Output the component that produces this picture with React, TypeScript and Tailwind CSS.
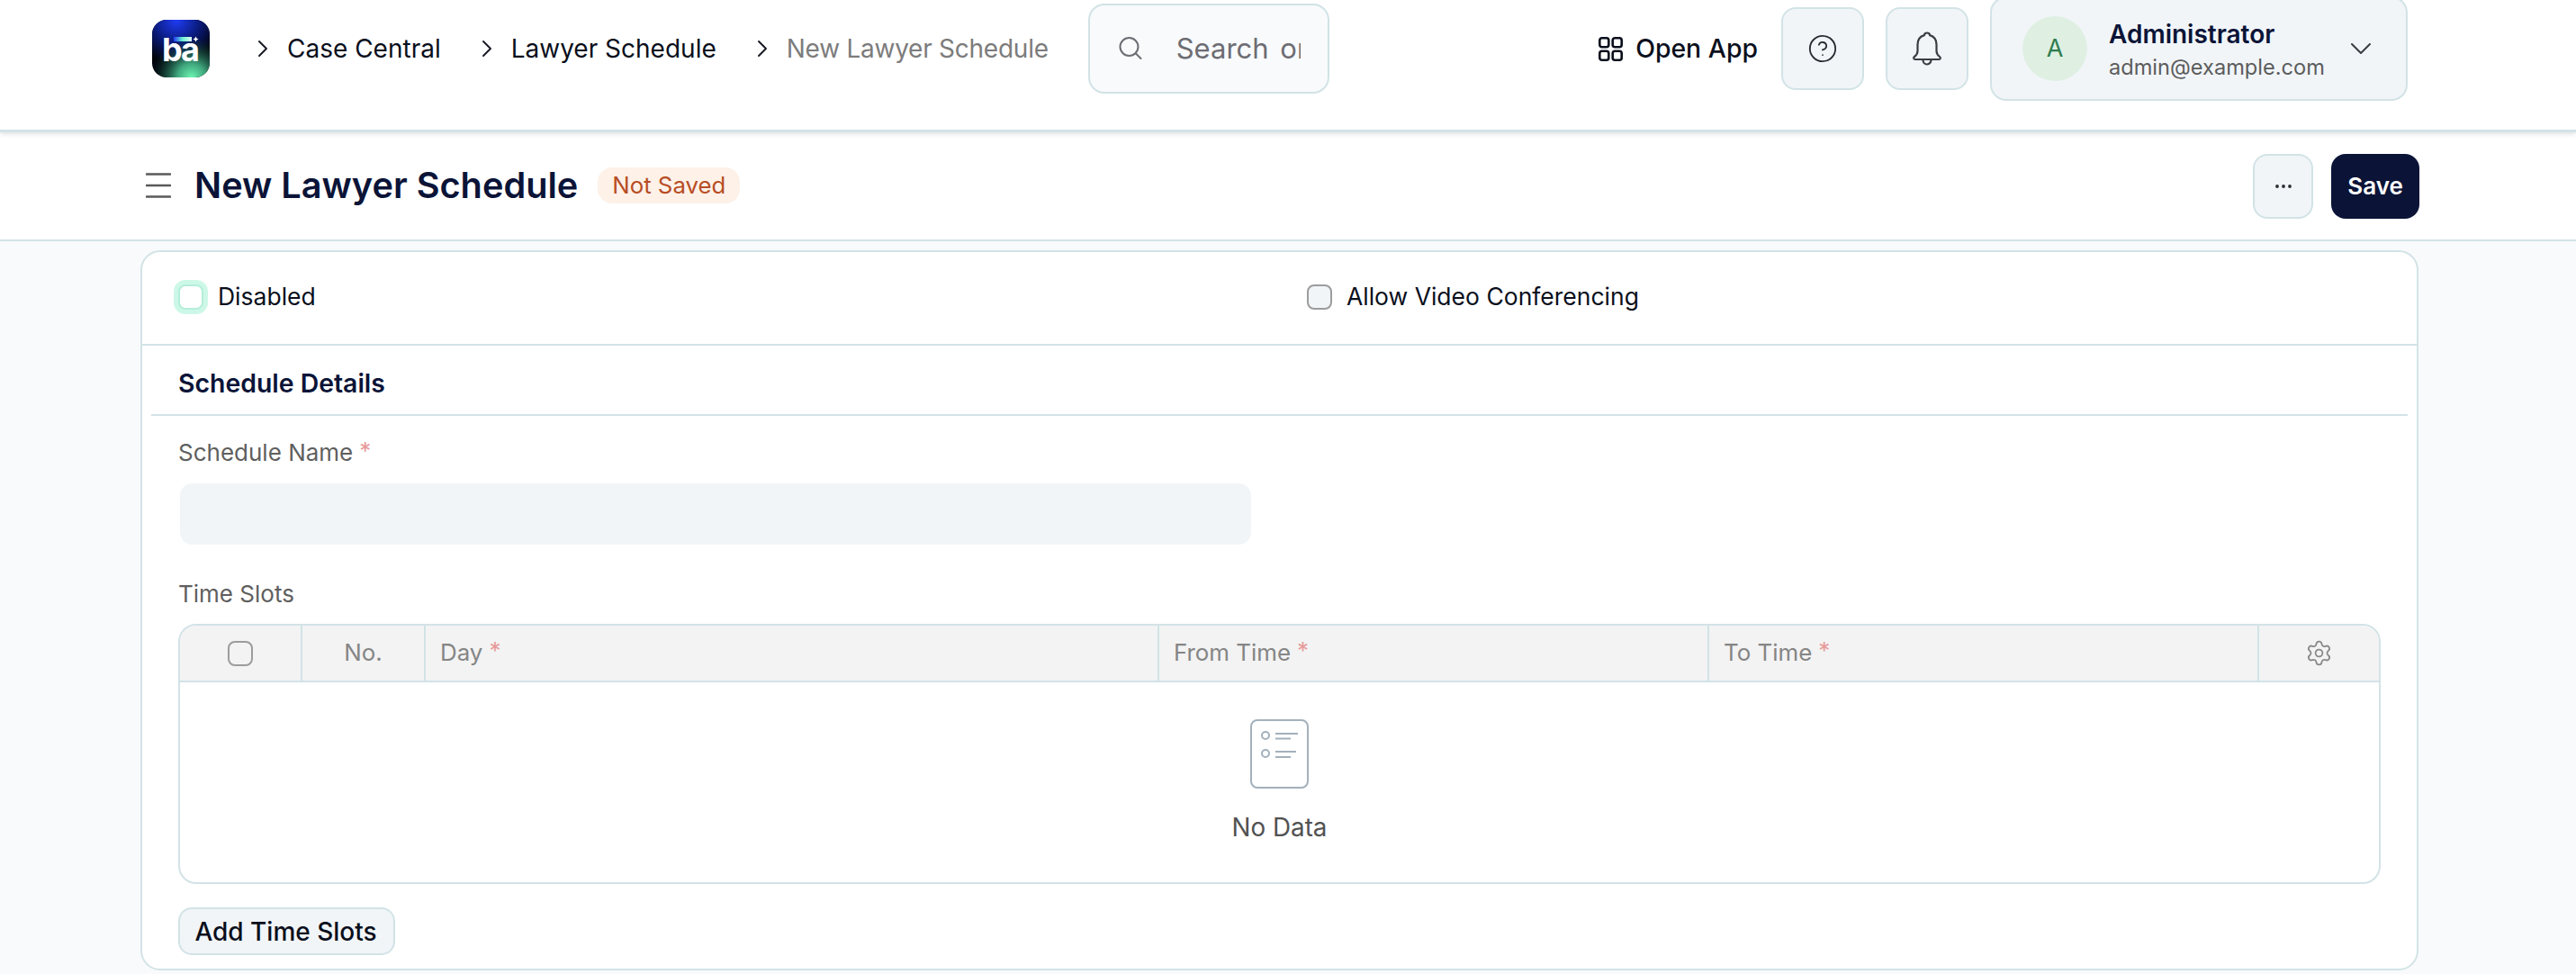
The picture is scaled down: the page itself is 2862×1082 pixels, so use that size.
import { ChevronRight, CircleHelp, Ellipsis, Settings } from "lucide-react";

const Logo = () => (
  <svg width="64" height="64" viewBox="0 0 64 64" className="shrink-0">
    <defs>
      <radialGradient id="logoBlue" cx="0.42" cy="0" r="0.75">
        <stop offset="0" stopColor="#1f3cf5" />
        <stop offset="0.55" stopColor="#0a1a7a" />
        <stop offset="1" stopColor="#0a1a7a" stopOpacity="0" />
      </radialGradient>
      <radialGradient id="logoGreen" cx="0.68" cy="1" r="0.7">
        <stop offset="0" stopColor="#6df5b2" />
        <stop offset="0.35" stopColor="#3fa57c" />
        <stop offset="1" stopColor="#0b3a32" stopOpacity="0" />
      </radialGradient>
      <linearGradient id="logoBar" x1="0" x2="1" y1="0" y2="0">
        <stop offset="0" stopColor="#1f3cf5" />
        <stop offset="0.5" stopColor="#6df5d2" />
        <stop offset="1" stopColor="#e6fff4" />
      </linearGradient>
      <clipPath id="logoClip">
        <rect width="64" height="64" rx="16" />
      </clipPath>
    </defs>
    <g clipPath="url(#logoClip)">
      <rect width="64" height="64" fill="#02040c" />
      <rect width="64" height="64" fill="url(#logoBlue)" />
      <rect width="64" height="64" fill="url(#logoGreen)" />
      <rect x="24" y="19" width="20" height="5" fill="url(#logoBar)" />
      <path d="M48.5 18.500 L49.500 20.500 L51.500 21.500 L49.500 22.500 L48.500 24.500 L47.500 22.500 L45.500 21.500 L47.500 20.500 Z" fill="#fff" />
      <text x="11" y="46" fontSize="36" fontWeight="700" fill="#fff" fontFamily="Inter, sans-serif" textLength="42">
        ba
      </text>
    </g>
  </svg>
);

const Crumb = ({ label, current }: { label: string; current?: boolean }) => (
  <div className="flex items-center gap-[11px]">
    <ChevronRight size={32} strokeWidth={1.4} className="shrink-0 text-[#14171f]" />
    <span className={current ? "tracking-[-0.25px] text-[#7c7c7c]" : "text-[#0a0f1c]"}>{label}</span>
  </div>
);

const SearchIcon = () => (
  <svg width="26" height="26" viewBox="0 0 26 26" fill="none" stroke="#6d6d73" strokeWidth="2" strokeLinecap="round" className="shrink-0">
    <circle cx="11.500" cy="11" r="10" />
    <path d="M19 18.500L24.500 24" />
  </svg>
);

const AppsIcon = () => (
  <svg width="27" height="27" viewBox="0 0 27 27" fill="none" stroke="#0a0f1c" strokeWidth="2.600" className="shrink-0">
    <rect x="1.300" y="1.300" width="10" height="10" rx="2.500" />
    <rect x="15.700" y="1.300" width="10" height="10" rx="2.500" />
    <rect x="1.300" y="15.700" width="10" height="10" rx="2.500" />
    <rect x="15.700" y="15.700" width="10" height="10" rx="2.500" />
  </svg>
);

const BellIcon = () => (
  <svg width="32" height="38" viewBox="0 0 32 38" fill="none" stroke="#3a3d42" strokeWidth="2.200" strokeLinejoin="round">
    <path d="M16 1.500c-1.800 0-3 1.200-3 2.600C8 5.500 5.500 9.500 5.500 14.500v7c0 3-1.500 5-3.500 6.500-1.300 1-1 3 .8 3h26.400c1.800 0 2.100-2 .8-3-2-1.500-3.500-3.500-3.500-6.500v-7c0-5-2.500-9-7.500-10.400 0-1.400-1.200-2.600-3-2.600z" />
    <path d="M11.500 31.500a4.500 5 0 0 0 9 0" />
  </svg>
);

const CaretDown = () => (
  <svg width="22" height="12" viewBox="0 0 22 12" fill="none" stroke="#3a3d42" strokeWidth="2" strokeLinecap="round" className="shrink-0">
    <path d="M1 1L11 11L21 1" />
  </svg>
);

const Hamburger = () => (
  <svg width="28" height="28" viewBox="0 0 28 28" className="shrink-0 text-[#5a5a5a]">
    <path d="M1 1.500H27M1 14H27M1 26.500H27" stroke="currentColor" strokeWidth="2.600" strokeLinecap="round" />
  </svg>
);

const Required = () => <span className="relative -top-[2px] ml-[7px] text-[#e79a9a]">*</span>;

const EmptyIcon = () => (
  <svg width="65" height="77" viewBox="0 0 65 77" fill="none" stroke="#a3b1bc">
    <rect x="1" y="1" width="63" height="75" rx="7" strokeWidth="2" />
    <circle cx="17" cy="18" r="4" strokeWidth="2" />
    <circle cx="17" cy="38" r="4" strokeWidth="2" />
    <path d="M28 16H53M28 21.500H45M28 36H51M28 42H45" strokeWidth="2" />
  </svg>
);

const HeaderCell = ({ children }: { children: React.ReactNode }) => (
  <div className="flex items-center border-r-2 border-[#d2e3e6] pl-[16px]">{children}</div>
);

export default function App() {
  return (
    <div className="h-[1082px] w-full overflow-hidden bg-[#f8fafc] font-['Inter',sans-serif]">
      <header className="relative z-10 h-[147px] border-b-[3px] border-[#d2e3e6] bg-white shadow-[0_2px_5px_rgba(0,0,0,0.12)]">
        <div className="flex h-[108px] items-center pl-[169px] pr-[187px] text-[28px]">
          <Logo />
          <nav className="ml-[43px] flex shrink-0 items-center gap-[35px]">
            <Crumb label="Case Central" />
            <Crumb label="Lawyer Schedule" />
            <Crumb label="New Lawyer Schedule" current />
          </nav>
          <div className="ml-[44px] flex h-[100px] w-[268px] shrink-0 items-center rounded-[18px] border-2 border-[#d2e3e6] bg-[#f8fafc] pl-[32px]">
            <SearchIcon />
            <div className="ml-[38px] w-[138px] overflow-hidden whitespace-nowrap text-[31px] text-[#6d6d73] [word-spacing:4px]">Search or type</div>
          </div>
          <div className="ml-auto flex items-center">
            <AppsIcon />
            <span className="ml-[14px] text-[28.4px] font-medium text-[#0a0f1c]">Open App</span>
            <button className="ml-[26px] flex h-[92px] w-[92px] items-center justify-center rounded-[16px] border-2 border-[#d2e3e6] bg-[#f1f5f8]">
              <CircleHelp size={34} strokeWidth={1.3} className="text-[#2a2e33]" />
            </button>
            <button className="ml-[24px] flex h-[92px] w-[92px] items-center justify-center rounded-[16px] border-2 border-[#d2e3e6] bg-[#f1f5f8]">
              <BellIcon />
            </button>
            <div className="ml-[24px] flex h-[116px] w-[464px] items-center rounded-[18px] border-2 border-[#d2e3e6] bg-[#f1f5f8] pl-[34px] pr-[39px]">
              <div className="flex h-[72px] w-[72px] shrink-0 items-center justify-center rounded-full bg-[#dff0e3] text-[27px] text-[#2f7d4f]">A</div>
              <div className="ml-[24px] flex flex-col gap-[5px] pt-[2px]">
                <span className="text-[28px] leading-[34px] font-semibold text-[#0b1437]">Administrator</span>
                <span className="text-[23.6px] leading-[30px] text-[#5c5c5c]">admin@example.com</span>
              </div>
              <div className="ml-auto">
                <CaretDown />
              </div>
            </div>
          </div>
        </div>
      </header>

      <div className="flex h-[121px] items-center justify-between border-b-2 border-[#d2e3e6] bg-white pl-[162px] pr-[174px]">
        <div className="flex items-center">
          <Hamburger />
          <h1 className="ml-[26px] text-[39.7px] font-semibold text-[#0b1437]">New Lawyer Schedule</h1>
          <span className="ml-[22px] flex h-[40px] w-[158px] items-center justify-center rounded-[16px] bg-[#fdf1e8] text-[25.8px] text-[#b84d24]">Not Saved</span>
        </div>
        <div className="flex items-center gap-[20px]">
          <button className="flex h-[72px] w-[67px] items-center justify-center rounded-[16px] border-2 border-[#d2e3e6] bg-[#f1f5f8]">
            <Ellipsis size={24} strokeWidth={1.8} className="text-[#2a2e33]" />
          </button>
          <button className="h-[72px] w-[98px] rounded-[16px] bg-[#0b1437] text-[26px] font-semibold text-white">Save</button>
        </div>
      </div>

      <main className="px-[156px] pt-[10px]">
        <section className="h-[800px] w-[2531px] rounded-[22px] border-2 border-[#d2e3e6] bg-white">
          <div className="flex h-[104px] items-center border-b-2 border-[#d2e3e6] pb-[2px] pl-[40px] text-[26.5px] text-[#0a0f1c]">
            <div className="flex w-[1254px] items-center gap-[16px]">
              <span className="h-[28px] w-[28px] rounded-[8px] border-2 border-[#b5eedb] bg-white shadow-[0_0_0_5px_#cdf8e8]" />
              <span>Disabled</span>
            </div>
            <div className="flex items-center gap-[16px]">
              <span className="h-[28px] w-[28px] rounded-[8px] border-2 border-[#9c9c9c] bg-[#f1f5f8]" />
              <span>Allow Video Conferencing</span>
            </div>
          </div>

          <div className="mx-[10px] flex h-[78px] items-center border-b-2 border-[#d2e3e6] pl-[30px] pt-[9px]">
            <h2 className="text-[28.4px] font-semibold text-[#0b1437]">Schedule Details</h2>
          </div>

          <div className="pl-[40px] pt-[26px]">
            <label className="block text-[26px] leading-[30px] text-[#5f5f5f]">
              Schedule Name
              <Required />
            </label>
            <div className="ml-[2px] mt-[19px] h-[68px] w-[1190px] rounded-[14px] bg-[#f1f5f8]" />

            <label className="mt-[40px] block text-[26px] leading-[30px] text-[#5f5f5f]">Time Slots</label>

            <div className="mt-[18px] h-[289px] w-[2447px] overflow-hidden rounded-[20px] border-2 border-[#d2e3e6]">
              <div className="grid h-[63px] grid-cols-[136px_137px_815px_611px_611px_1fr] border-b-2 border-[#d2e3e6] bg-[#f3f3f3] text-[25.9px] text-[#858585]">
                <div className="flex items-center justify-center border-r-2 border-[#d2e3e6]">
                  <span className="h-[28px] w-[28px] rounded-[8px] border-2 border-[#9c9c9c] bg-[#f3f3f3]" />
                </div>
                <div className="flex items-center justify-center border-r-2 border-[#d2e3e6]">No.</div>
                <HeaderCell>
                  Day
                  <Required />
                </HeaderCell>
                <HeaderCell>
                  From Time
                  <Required />
                </HeaderCell>
                <HeaderCell>
                  To Time
                  <Required />
                </HeaderCell>
                <div className="flex items-center justify-center">
                  <Settings size={31} strokeWidth={1.4} className="text-[#8a8a8a]" />
                </div>
              </div>
              <div className="flex flex-col items-center pt-[41px]">
                <EmptyIcon />
                <span className="mt-[26px] text-[27.8px] leading-[34px] text-[#525252]">No Data</span>
              </div>
            </div>

            <button className="mt-[26px] h-[53px] w-[241px] rounded-[15px] border-2 border-[#d2e3e6] bg-[#f1f5f8] pr-[2px] text-[28px] font-medium text-[#0a0f1c]">Add Time Slots</button>
          </div>
        </section>
      </main>
    </div>
  );
}
